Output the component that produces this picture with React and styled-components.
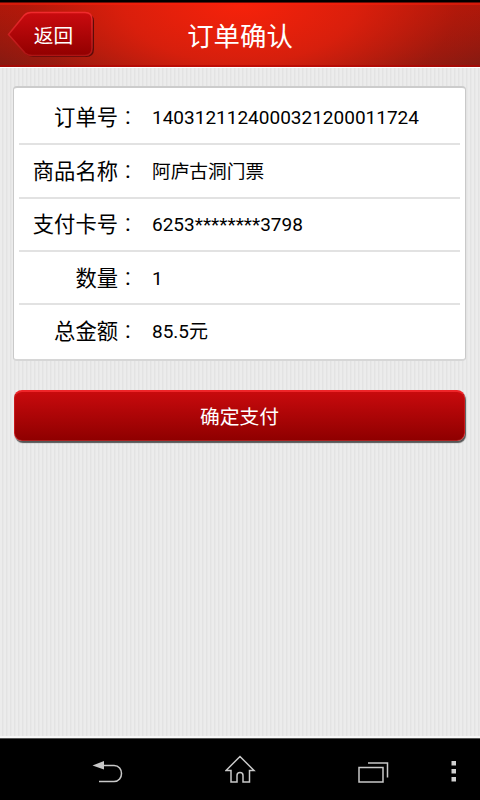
import styled, { createGlobalStyle } from "styled-components"

const GlobalStyle = createGlobalStyle`
  * {
    box-sizing: border-box;
  }

  body {
    margin: 0;
    background: #000000;
    font-family: Roboto, "Noto Sans CJK SC", sans-serif;
  }
`

const Screen = styled.div`
  width: 480px;
  height: 800px;
  display: flex;
  flex-direction: column;
  overflow: hidden;
  background: #000000;
`

const Header = styled.header`
  height: 65px;
  margin-top: 2px;
  flex-shrink: 0;
  display: grid;
  grid-template-columns: 100px 1fr 100px;
  align-items: center;
  border-top: 1px solid #6e0d06;
  background:
    linear-gradient(180deg, rgba(255, 30, 10, 0.45) 0 2px, transparent 2px 62px, rgba(180, 0, 0, 0.6) 62px),
    radial-gradient(ellipse 290px 150px at 50% 0, rgba(246, 34, 10, 1), rgba(228, 32, 12, 0.85) 40%, rgba(200, 26, 10, 0.35) 75%, transparent),
    linear-gradient(180deg, #a9170a, #7d1a12);
`

const BackButton = styled.button`
  width: 88px;
  height: 48px;
  margin: 8px 0 0 7px;
  padding: 0;
  border: none;
  background: none;
  display: grid;
  align-self: start;
  cursor: pointer;

  > * {
    grid-area: 1 / 1;
  }
`

const BackLabel = styled.span`
  align-self: center;
  padding: 3px 0 0 5px;
  color: #ffffff;
  font: 400 19.7px/28px Roboto, "Noto Sans CJK SC", sans-serif;
`

const Title = styled.h1`
  margin: 0;
  padding-top: 3px;
  color: #ffffff;
  font-size: 26.4px;
  font-weight: 400;
  line-height: 36px;
  text-align: center;
`

const Content = styled.main`
  flex: 1;
  padding: 18px 14px 0 13px;
  border-top: 1px solid #ffffff;
  border-bottom: 2px solid #f7f7f7;
  background: repeating-linear-gradient(90deg, #ececec 0 2px, #e3e3e3 2px 3px, #e8e8e8 3px 4px);
`

const Card = styled.dl`
  height: 275px;
  margin: 0;
  padding: 2px 5px;
  border: 1px solid #c9c9c9;
  border-top: 2px solid #cccccc;
  border-bottom: 2px solid #d6d6d6;
  border-radius: 4px;
  background: #ffffff;
`

const Row = styled.div`
  height: 53.3px;
  padding-top: 2px;
  display: flex;
  align-items: center;
  color: #000000;
  line-height: 30px;

  & + & {
    border-top: 2px solid #e2e2e2;
  }
`

const Label = styled.dt`
  width: 99px;
  font-size: 21.3px;
  text-align: right;
  white-space: nowrap;
`

const Colon = styled.span`
  width: 34px;
  padding: 0 0 4px 7px;
  font-size: 23.5px;
`

const Value = styled.dd`
  margin: 0;
  font-size: ${({ $cjk }) => ($cjk ? "18.7px" : "19px")};
  white-space: nowrap;
`

const PayButton = styled.button`
  width: 451px;
  height: 51px;
  margin: 29px 0 0 1px;
  padding: 3px 0 0;
  display: block;
  border: 1px solid #c9191c;
  border-top: 2px solid #ef2529;
  border-bottom-color: #ac2020;
  border-radius: 8px;
  background: linear-gradient(180deg, #c80a0d, #8f0000);
  box-shadow: 1px 2px 1px #555555;
  color: #ffffff;
  font: 400 19.8px/28px Roboto, "Noto Sans CJK SC", sans-serif;
  cursor: pointer;
`

const NavBar = styled.nav`
  height: 62px;
  flex-shrink: 0;
  padding: 2px 0 0 92px;
  border-top: 1px solid #555555;
  display: grid;
  grid-template-columns: 133px 133px 93px 1fr;
  align-items: center;
  background: #000000;
`

const NavIcon = styled.svg`
  display: block;
  fill: none;
  stroke: #c8c8c8;
  stroke-width: 1.5;
`

const orderRows = [
  { label: "订单号", value: "1403121124000321200011724" },
  { label: "商品名称", value: "阿庐古洞门票", cjk: true },
  { label: "支付卡号", value: "6253********3798" },
  { label: "数量", value: "1" },
  { label: "总金额", value: "85.5元" },
]

const BackShape = () => (
  <svg width="88" height="48" viewBox="0 0 88 48">
    <defs>
      <linearGradient id="backFill" x1="0" y1="0" x2="0" y2="1">
        <stop offset="0" stopColor="#ca0b0f" />
        <stop offset="1" stopColor="#920000" />
      </linearGradient>
      <linearGradient id="backEdge" x1="0" y1="0" x2="0" y2="1">
        <stop offset="0" stopColor="#f02a2d" />
        <stop offset="1" stopColor="#ad1515" />
      </linearGradient>
    </defs>
    <path
      d="M2.5 25 L18 6 Q21 3 25 3 H79 Q87 3 87 10 V38 Q87 46 79 46 H26 Q22 46 19 43 Z"
      fill="#5c0b08"
    />
    <path
      d="M1.5 23.500 L17 4.500 Q20 1.500 24 1.500 H78 Q85 1.500 85 8.500 V37 Q85 44.500 78 44.500 H25 Q21 44.500 18 42 Z"
      fill="url(#backFill)"
      stroke="url(#backEdge)"
      strokeWidth="1.5"
    />
  </svg>
)

const App = () => {
  return (
    <>
      <GlobalStyle />
      <Screen>
        <Header>
          <BackButton type="button">
            <BackShape />
            <BackLabel>返回</BackLabel>
          </BackButton>
          <Title>订单确认</Title>
        </Header>

        <Content>
          <Card>
            {orderRows.map((row) => (
              <Row key={row.label}>
                <Label>{row.label}</Label>
                <Colon>:</Colon>
                <Value $cjk={row.cjk}>{row.value}</Value>
              </Row>
            ))}
          </Card>
          <PayButton type="button">确定支付</PayButton>
        </Content>

        <NavBar>
          <NavIcon width="32" height="32" viewBox="0 0 32 32">
            <path d="M8 10.500 H22 C32 10.500 32 26.500 22 26.500 H7" />
            <path d="M0.500 10.500 L12 6 V14.500 Z" fill="#c8c8c8" stroke="none" />
          </NavIcon>
          <NavIcon width="32" height="32" viewBox="0 0 32 32">
            <path d="M15 1.500 L1 15.500 H6 V27 H12 V20.500 C12 16.500 18 16.500 18 20.500 V27 H24.500 V15.500 H29 Z" />
          </NavIcon>
          <NavIcon width="32" height="32" viewBox="0 0 32 32">
            <path d="M1 12.500 H25 V27 H1 Z" />
            <path d="M10 8 H29.500 V22.500" />
          </NavIcon>
          <NavIcon width="6" height="24" viewBox="0 0 6 24">
            <path d="M0.500 2 h4.500 v4.500 h-4.500 Z M0.500 10 h4.500 v4.500 h-4.500 Z M0.500 18 h4.500 v4.500 h-4.500 Z" fill="#d0d0d0" stroke="none" />
          </NavIcon>
        </NavBar>
      </Screen>
    </>
  )
}

export default App
